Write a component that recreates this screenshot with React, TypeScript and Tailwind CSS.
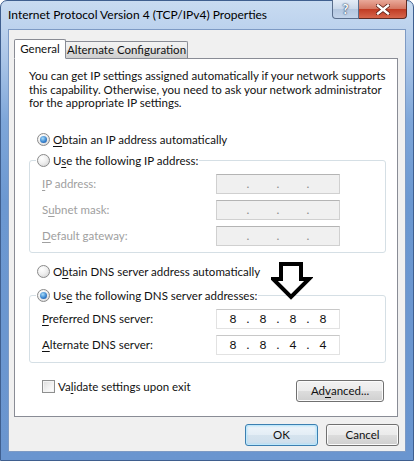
import React from "react";

const F = "font-['Lato','Noto_Sans',sans-serif]";

function U({ children }: { children: React.ReactNode }) {
  return <span className="underline underline-offset-[2px] decoration-[1px]">{children}</span>;
}

function Radio({ checked }: { checked?: boolean }) {
  return (
    <span className="inline-flex w-[13px] h-[13px] shrink-0 rounded-full border border-[#8a8a8a] bg-[radial-gradient(circle_at_35%_30%,#ffffff,#f0f0f0_45%,#cfcfcf)] items-center justify-center">
      {checked && (
        <span className="w-[7px] h-[7px] rounded-full bg-[radial-gradient(circle_at_40%_35%,#a8dcfa,#3b86cf_55%,#12459a)]" />
      )}
    </span>
  );
}

function RadioRow({ checked, children }: { checked?: boolean; children: React.ReactNode }) {
  return (
    <div className="flex items-center h-[16px] gap-[3px] whitespace-nowrap">
      <Radio checked={checked} />
      <span className="leading-[16px]">{children}</span>
    </div>
  );
}

function IpBox({ values, disabled }: { values?: string[]; disabled?: boolean }) {
  const v = values ?? ["", "", "", ""];
  return (
    <div
      className={`flex items-center w-[124px] h-[20px] border pl-[5px] text-[12px] ${
        disabled
          ? "bg-[#f0f0f0] border-[#d0d0d0] border-t-[#b4b4b4]"
          : "bg-white border-[#e2e2e2] border-t-[#c8c8c8]"
      }`}
    >
      {v.map((x, i) => (
        <React.Fragment key={i}>
          <span className="w-[22px] text-center leading-[18px]">{x}</span>
          {i < 3 && (
            <span className={`w-[8px] text-center leading-[18px] ${disabled ? "text-[#8c8c8c]" : ""}`}>.</span>
          )}
        </React.Fragment>
      ))}
    </div>
  );
}

function Row({ label, disabled, values }: { label: React.ReactNode; disabled?: boolean; values?: string[] }) {
  return (
    <div className="flex items-center h-[20px]">
      <span className={`w-[174px] leading-[16px] whitespace-nowrap ${disabled ? "text-[#a0a0a0]" : ""}`}>{label}</span>
      <IpBox disabled={disabled} values={values} />
    </div>
  );
}

const btn =
  "h-[22px] rounded-[3px] border border-[#707070] bg-[linear-gradient(#f2f2f2,#ebebeb_50%,#dddddd_50%,#cfcfcf)] shadow-[inset_0_0_0_1px_#fbfbfb] flex items-center justify-center leading-[16px] whitespace-nowrap";

export default function App() {
  return (
    <div className={`${F} relative text-[11.5px] text-[#111] w-[414px] h-[461px] flex flex-col rounded-t-[7px] border border-[#3f5f8f] bg-[linear-gradient(180deg,#c8dbf1_0px,#bcd2ed_28px,#a9c4e7_60px,#7ea6d9_120px,#6c98d1_200px,#6a95cf_100%)]`}>
      {/* title bar */}
      <div className="h-[28px] flex items-start shrink-0">
        <div className="pl-[7px] pt-[6px] leading-[16px] text-[12px] text-black flex-1 whitespace-nowrap">
          Internet Protocol Version 4 (TCP/IPv4) Properties
        </div>
        <div className="flex mr-[6px] -mt-[1px]">
          <div className="w-[27px] h-[19px] rounded-bl-[4px] border border-[#5a6e8c] border-t-0 bg-[linear-gradient(#e4ecf6,#c9d7e9_50%,#b3c6df_50%,#c3d4ea)] flex items-center justify-center text-white font-bold text-[13px] leading-none [text-shadow:0_0_2px_#1f3557,0_0_1px_#1f3557]">
            ?
          </div>
          <div className="w-[48px] h-[19px] rounded-br-[4px] border border-[#5e2a22] border-t-0 border-l-0 bg-[linear-gradient(#e9a99a,#d47560_50%,#c03a22_50%,#d6664c)] flex items-center justify-center">
            <svg width="14" height="11" viewBox="0 0 14 11">
              <path d="M2 1.5 L12 9.5 M12 1.5 L2 9.5" stroke="#5a1d14" strokeWidth="4" strokeLinecap="square" />
              <path d="M2 1.5 L12 9.5 M12 1.5 L2 9.5" stroke="#ffffff" strokeWidth="2.4" strokeLinecap="square" />
            </svg>
          </div>
        </div>
      </div>

      {/* client area */}
      <div className="mx-[7px] mb-[8px] flex-1 bg-[#f0f0f0] border border-[#7d9ac4] flex flex-col">
        {/* tabs */}
        <div className="pt-[8px] pl-[5px] flex items-end h-[28px] shrink-0">
          <div className="relative z-10 -mb-[1px] h-[20px] w-[52px] bg-white border border-[#898c95] border-b-white rounded-t-[2px] flex items-center justify-center leading-[16px] whitespace-nowrap">
            General
          </div>
          <div className="h-[17px] w-[122px] border border-[#898c95] border-l-0 border-b-0 rounded-tr-[2px] bg-[linear-gradient(#f2f2f2,#ebebeb_50%,#dddddd_50%,#cfcfcf)] flex items-center justify-center leading-[16px] whitespace-nowrap">
            Alternate Configuration
          </div>
        </div>

        {/* panel */}
        <div className="ml-[5px] mr-[7px] h-[359px] bg-white border border-[#898c95] pt-[10px] pl-[14px] pr-[11px] flex flex-col">
          <p className="leading-[13.5px] whitespace-nowrap">
            You can get IP settings assigned automatically if your network supports
            <br />
            this capability. Otherwise, you need to ask your network administrator
            <br />
            for the appropriate IP settings.
          </p>

          <div className="mt-[22px] ml-[8px]">
            <RadioRow checked>
              <U>O</U>btain an IP address automatically
            </RadioRow>
          </div>

          <fieldset className="mt-[5px] border border-[#d5dfe5] rounded-[3px] pb-[6px]">
            <legend className="ml-[6px] px-[1px]">
              <RadioRow>
                U<U>s</U>e the following IP address:
              </RadioRow>
            </legend>
            <div className="pl-[12px] mt-[5px] flex flex-col gap-[6px]">
              <Row disabled label={<><U>I</U>P address:</>} />
              <Row disabled label={<>S<U>u</U>bnet mask:</>} />
              <Row disabled label={<><U>D</U>efault gateway:</>} />
            </div>
          </fieldset>

          <div className="mt-[11px] ml-[8px]">
            <RadioRow>
              O<U>b</U>tain DNS server address automatically
            </RadioRow>
          </div>

          <fieldset className="mt-[8px] border border-[#d5dfe5] rounded-[3px] pb-[7px]">
            <legend className="ml-[6px] px-[1px]">
              <RadioRow checked>
                Us<U>e</U> the following DNS server addresses:
              </RadioRow>
            </legend>
            <div className="pl-[12px] mt-[5px] flex flex-col gap-[6px]">
              <Row label={<><U>P</U>referred DNS server:</>} values={["8", "8", "8", "8"]} />
              <Row label={<><U>A</U>lternate DNS server:</>} values={["8", "8", "4", "4"]} />
            </div>
          </fieldset>

          <div className="mt-[16px] flex items-start justify-between">
            <div className="ml-[13px] flex items-center h-[16px] gap-[3px] whitespace-nowrap">
              <span className="w-[13px] h-[13px] border border-[#8e8f8f] bg-[linear-gradient(135deg,#dcdcdc,#f4f4f4_60%,#ffffff)] shadow-[inset_0_0_0_1px_#f4f4f4]" />
              <span className="leading-[16px]">
                Va<U>l</U>idate settings upon exit
              </span>
            </div>
            <div className={`${btn} mt-[1px] mr-[2px] w-[88px]`}>
              Ad<U>v</U>anced...
            </div>
          </div>
        </div>

        {/* bottom buttons */}
        <div className="flex justify-end gap-[8px] pr-[6px] mt-[7px]">
          <div className="h-[22px] w-[73px] rounded-[3px] border border-[#3c7fb1] bg-[linear-gradient(#eef5fa,#e3edf5_50%,#d5e3ee_50%,#cfdfec)] shadow-[inset_0_0_0_1px_#bfe8fb,inset_0_0_2px_1px_#9fd8f7] flex items-center justify-center leading-[16px]">
            OK
          </div>
          <div className={`${btn} w-[73px]`}>Cancel</div>
        </div>
      </div>

      {/* annotation arrow */}
      <svg className="absolute left-[270px] top-[259px]" width="42" height="42" viewBox="0 0 42 42">
        <polygon
          points="10,4 30,4 30,19 38,19 20,37 2,19 10,19"
          fill="white"
          stroke="black"
          strokeWidth="4"
          strokeLinejoin="miter"
        />
      </svg>
    </div>
  );
}
